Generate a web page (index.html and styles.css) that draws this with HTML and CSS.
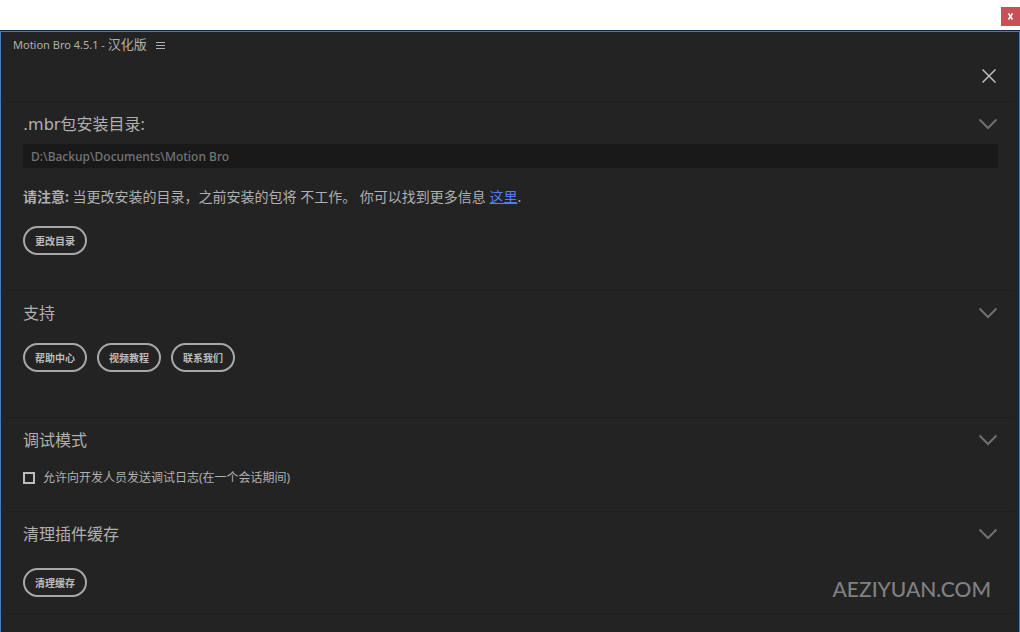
FILE: index.html
```html
<!DOCTYPE html>
<html lang="zh-CN">
<head>
<meta charset="utf-8">
<meta name="viewport" content="width=device-width, initial-scale=1">
<title>Motion Bro 4.5.1 - 汉化版</title>
<link rel="stylesheet" href="styles.css">
</head>
<body>
<div class="window">
  <div class="titlebar"><button class="window-close" type="button" aria-label="关闭窗口"><svg width="7" height="7" viewBox="0 0 7 7"><path d="M1.500 .5l4 6M5.500 .5l-4 6"/></svg></button></div>
  <div class="panel">
    <header class="panel-header">
      <div class="tab">
        <span>Motion Bro 4.5.1 - <span class="tab-cjk">汉化版</span></span>
        <button class="icon-button menu" type="button" aria-label="菜单"><svg width="9" height="9" viewBox="0 0 9 9"><path d="M0 1.5h9M0 4.5h9M0 7.5h9"/></svg></button>
      </div>
      <button class="icon-button panel-close" type="button" aria-label="关闭"><svg width="16" height="16" viewBox="0 0 16 16"><path d="M1.5 1.5l13 13M14.5 1.5l-13 13"/></svg></button>
    </header>
    <main>
      <section class="section">
        <div class="section-head">
          <h2><label for="path"><span class="wide">.mbr</span>包安装目录:</label></h2>
          <button class="icon-button chevron" type="button" aria-label="折叠"><svg width="20" height="12" viewBox="0 0 20 12"><path d="M1.5 1.5L10 10l8.500-8.500"/></svg></button>
        </div>
        <input class="path" id="path" type="text" value="D:\Backup\Documents\Motion Bro" readonly>
        <p class="note"><b>请注意:</b> 当更改安装的目录，之前安装的包将 不工作。 你可以找到更多信息 <a href="#info">这里</a>.</p>
        <div class="actions"><button class="pill" type="button">更改目录</button></div>
      </section>
      <section class="section support">
        <div class="section-head">
          <h2>支持</h2>
          <button class="icon-button chevron" type="button" aria-label="折叠"><svg width="20" height="12" viewBox="0 0 20 12"><path d="M1.5 1.5L10 10l8.500-8.500"/></svg></button>
        </div>
        <div class="actions"><button class="pill" type="button">帮助中心</button><button class="pill" type="button">视频教程</button><button class="pill" type="button">联系我们</button></div>
      </section>
      <section class="section debug">
        <div class="section-head">
          <h2>调试模式</h2>
          <button class="icon-button chevron" type="button" aria-label="折叠"><svg width="20" height="12" viewBox="0 0 20 12"><path d="M1.5 1.5L10 10l8.500-8.500"/></svg></button>
        </div>
        <label class="check"><input type="checkbox"><span>允许向开发人员发送调试日志(在一个会话期间)</span></label>
      </section>
      <section class="section cache">
        <div class="section-head">
          <h2>清理插件缓存</h2>
          <button class="icon-button chevron" type="button" aria-label="折叠"><svg width="20" height="12" viewBox="0 0 20 12"><path d="M1.5 1.5L10 10l8.500-8.500"/></svg></button>
        </div>
        <div class="actions"><button class="pill" type="button">清理缓存</button><span class="watermark">AEZIYUAN.COM</span></div>
      </section>
    </main>
  </div>
</div>
</body>
</html>
```
FILE: styles.css
```css
* { box-sizing: border-box; }

body {
  margin: 0;
  background: #fff;
  color: #b0b0b0;
  font-family: "Noto Sans", "Noto Sans CJK SC", sans-serif;
}

button { font-family: inherit; cursor: pointer; }
svg { display: block; fill: none; stroke: currentColor; }

.window { display: flex; flex-direction: column; min-height: 100vh; }

.titlebar {
  display: flex;
  justify-content: flex-end;
  padding: 7px 0 5px;
}

.window-close {
  display: grid;
  place-items: center;
  width: 19px;
  height: 19px;
  padding: 0;
  border: 0;
  background: #c75056;
  color: #fff;
}
.window-close svg { stroke-width: 1.5; }

.panel {
  flex: 1;
  padding: 0 5px;
  background: #232323;
  border: solid #4a7db8;
  border-width: 1px 1px 0;
  outline: 1px solid #14263f;
  box-shadow: inset 2px 0 #14263f, inset -2px 0 #14263f;
}

.panel-header {
  display: flex;
  flex-direction: column;
  height: 69px;
  padding: 3px 17px 0 7px;
}

.tab {
  display: flex;
  align-items: center;
  gap: 9px;
  font-size: 11px;
  line-height: 20px;
}
.tab-cjk { font-size: 13px; line-height: 1; }

.icon-button { padding: 0; border: 0; background: none; color: inherit; }
.panel-close { align-self: flex-end; margin-top: 13px; color: #bdbdbd; }
.panel-close svg { stroke-width: 1.5; }

.section {
  padding: 10px 16px 35px 17px;
  border-top: 1px solid #1e1e1e;
}
.section-head { display: flex; align-items: center; justify-content: space-between; }
.section-head h2 { margin: 0; font-size: 16px; font-weight: 400; line-height: 24px; }
.wide { font-family: "DejaVu Sans", sans-serif; line-height: 1; }
.chevron { color: #707070; }
.chevron svg { stroke-width: 2; }

.path {
  display: block;
  width: 100%;
  height: 24px;
  margin-top: 8px;
  padding: 0 8px;
  border: 0;
  border-radius: 3px;
  background: #191919;
  color: #747474;
  font-family: "Noto Sans", sans-serif;
  font-size: 12px;
  font-weight: 500;
}

.note { margin: 19px 0; font-size: 14px; line-height: 20px; }
.note a { color: #4f7ff0; }

.actions { display: flex; align-items: center; gap: 10px; }
.pill {
  height: 29px;
  padding: 0 10px;
  border: 2px solid #a8a8a8;
  border-radius: 15px;
  background: none;
  color: #bcbcbc;
  font-size: 10px;
  font-weight: 700;
}

.support { padding-bottom: 45px; }
.support .actions { margin-top: 18px; }

.debug { padding-bottom: 23px; }
.check {
  display: flex;
  align-items: center;
  gap: 8px;
  width: fit-content;
  margin-top: 16px;
  font-size: 12px;
  line-height: 20px;
}
.check input {
  appearance: none;
  width: 12px;
  height: 12px;
  margin: 0;
  border: 2px solid #bdbdbd;
}
.check input:checked { background: #4f7ff0; }

.cache { padding-bottom: 16px; border-bottom: 1px solid #1e1e1e; }
.cache .actions { margin-top: 22px; justify-content: space-between; }
.watermark {
  padding: 12px 7px 0 0;
  color: #808080;
  font-family: Lato, sans-serif;
  font-size: 21px;
  font-weight: 500;
  line-height: 17px;
}
```
